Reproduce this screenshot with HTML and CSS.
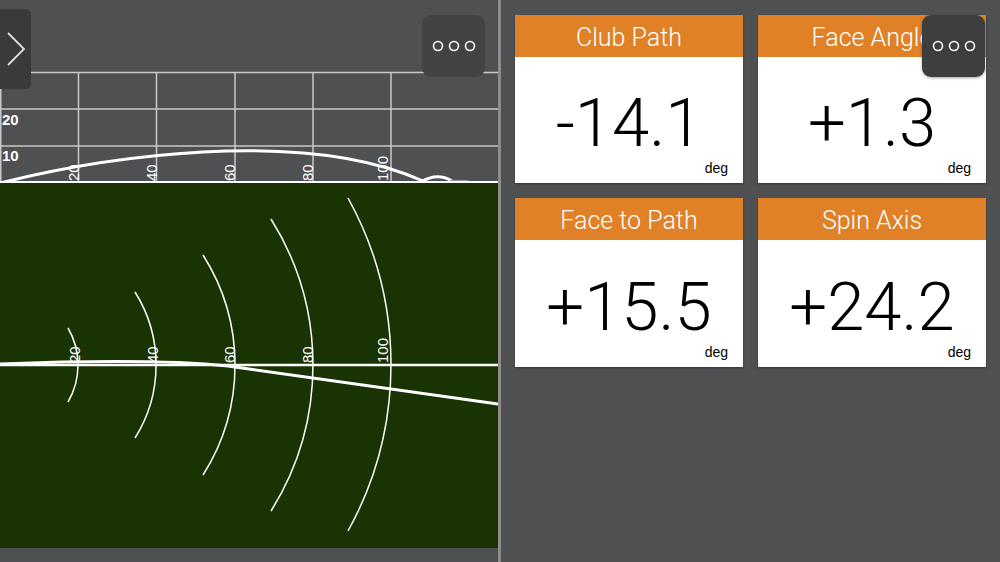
FILE: index.html
```html
<!DOCTYPE html>
<html lang="en">
<head>
  <meta charset="UTF-8" />
  <meta name="viewport" content="width=device-width, initial-scale=1.0"/>
  <title>Shot Data</title>
  <link rel="stylesheet" href="styles.css">
</head>
<body>
  <div class="screen">
    <section class="flight">
      <!-- side view: height over carry -->
      <svg class="side-view" width="498" height="183" viewBox="0 0 498 183">
        <g class="grid">
          <line x1="0" y1="72.5" x2="498" y2="72.5"/>
          <line x1="0" y1="109" x2="498" y2="109"/>
          <line x1="0" y1="146" x2="498" y2="146"/>
          <line x1="0.75" y1="72" x2="0.75" y2="182"/>
          <line x1="78.5" y1="72" x2="78.5" y2="182"/>
          <line x1="156.5" y1="72" x2="156.5" y2="182"/>
          <line x1="235" y1="72" x2="235" y2="182"/>
          <line x1="313" y1="72" x2="313" y2="182"/>
          <line x1="391" y1="72" x2="391" y2="182"/>
        </g>
        <text class="y-label" x="2" y="124.5">20</text>
        <text class="y-label" x="2" y="161">10</text>
        <text class="x-label" transform="translate(79 181) rotate(-90)">20</text>
        <text class="x-label" transform="translate(157 181) rotate(-90)">40</text>
        <text class="x-label" transform="translate(235 181) rotate(-90)">60</text>
        <text class="x-label" transform="translate(313 181) rotate(-90)">80</text>
        <text class="x-label" transform="translate(388 181) rotate(-90)">100</text>
        <path class="trace" d="M0 183 C 100 158, 300 126, 423 181"/>
        <path class="bounce" d="M421 182 Q437 172 452 181"/>
        <line class="roll" x1="450" y1="181" x2="468" y2="181"/>
        <line class="ground" x1="0" y1="182" x2="498" y2="182"/>
      </svg>

      <!-- top view: dispersion -->
      <svg class="top-view" width="498" height="365" viewBox="0 183 498 365">
        <rect x="0" y="183" width="498" height="365" class="turf"/>
        <g class="rings">
          <path d="M68 328 A73.5 73.5 0 0 1 68 402"/>
          <path d="M135 292 A137 137 0 0 1 135 438"/>
          <path d="M203 255 A205 205 0 0 1 203 475"/>
          <path d="M271 219 A275 275 0 0 1 271 511"/>
          <path d="M348 198 A344 344 0 0 1 348 531"/>
        </g>
        <text class="x-label" transform="translate(80 363) rotate(-90)">20</text>
        <text class="x-label" transform="translate(158 363) rotate(-90)">40</text>
        <text class="x-label" transform="translate(235 363) rotate(-90)">60</text>
        <text class="x-label" transform="translate(313 363) rotate(-90)">80</text>
        <text class="x-label" transform="translate(388 363) rotate(-90)">100</text>
        <line class="target" x1="0" y1="365" x2="498" y2="365"/>
        <path class="shot" d="M0 364 C 80 361, 170 360, 228 366 L 498 404"/>
      </svg>

      <button class="drawer-toggle" aria-label="Open">
        <svg width="20" height="34" viewBox="0 0 20 34"><path d="M2 1 L18 17 L2 33"/></svg>
      </button>
      <button class="menu-btn flight-menu" aria-label="More">
        <svg width="44" height="12" viewBox="0 0 44 12">
          <circle cx="6" cy="6" r="4.5"/><circle cx="22" cy="6" r="4.5"/><circle cx="38" cy="6" r="4.5"/>
        </svg>
      </button>
    </section>

    <div class="divider"></div>

    <section class="metrics">
      <div class="tile">
        <div class="tile-title">Club Path</div>
        <div class="tile-body">
          <div class="tile-value">-14.1</div>
          <div class="tile-unit">deg</div>
        </div>
      </div>
      <div class="tile">
        <div class="tile-title">Face Angle</div>
        <div class="tile-body">
          <div class="tile-value">+1.3</div>
          <div class="tile-unit">deg</div>
        </div>
      </div>
      <div class="tile">
        <div class="tile-title">Face to Path</div>
        <div class="tile-body">
          <div class="tile-value">+15.5</div>
          <div class="tile-unit">deg</div>
        </div>
      </div>
      <div class="tile">
        <div class="tile-title">Spin Axis</div>
        <div class="tile-body">
          <div class="tile-value">+24.2</div>
          <div class="tile-unit">deg</div>
        </div>
      </div>

      <button class="menu-btn metrics-menu" aria-label="More">
        <svg width="44" height="12" viewBox="0 0 44 12">
          <circle cx="6" cy="6" r="4.5"/><circle cx="22" cy="6" r="4.5"/><circle cx="38" cy="6" r="4.5"/>
        </svg>
      </button>
    </section>
  </div>
</body>
</html>
```

FILE: styles.css
```css
* { box-sizing: border-box; }
html, body {
  margin: 0;
  height: 100%;
}
body {
  background: #4f5052;
  font-family: Roboto, "Liberation Sans", Arial, sans-serif;
  overflow: hidden;
}
.screen {
  display: flex;
  width: 1000px;
  height: 562px;
}

/* left: ball flight */
.flight {
  position: relative;
  width: 498px;
  display: flex;
  flex-direction: column;
}
.flight svg { display: block; }
.grid line {
  stroke: #c9c9c9;
  stroke-width: 1.5;
}
.y-label {
  fill: #fff;
  font-family: "Liberation Sans", Arial, sans-serif;
  font-weight: bold;
  font-size: 15px;
}
.x-label {
  fill: #fff;
  font-family: "Liberation Sans", Arial, sans-serif;
  font-size: 15px;
}
.trace, .bounce, .shot {
  fill: none;
  stroke: #fff;
  stroke-width: 3;
}
.roll {
  stroke: #9a9a9a;
  stroke-width: 2;
}
.ground {
  stroke: #fff;
  stroke-width: 2;
}
.turf { fill: #1a3303; }
.rings path {
  fill: none;
  stroke: #fff;
  stroke-width: 1.5;
}
.target {
  stroke: #fff;
  stroke-width: 2.5;
}

.drawer-toggle {
  position: absolute;
  left: 0;
  top: 9px;
  width: 31px;
  height: 80px;
  padding: 0;
  border: none;
  border-radius: 0 5px 5px 0;
  background: #3a3a3c;
  display: flex;
  align-items: center;
  justify-content: center;
}
.drawer-toggle path {
  fill: none;
  stroke: #e0e0e0;
  stroke-width: 1.8;
}

.menu-btn {
  position: absolute;
  top: 15px;
  width: 63px;
  height: 62px;
  padding: 0;
  border: none;
  border-radius: 9px;
  background: #434345;
  display: flex;
  align-items: center;
  justify-content: center;
}
.menu-btn circle {
  fill: none;
  stroke: #fff;
  stroke-width: 1.6;
}
.flight-menu { right: 13px; }
.metrics-menu {
  right: 15px;
  background: #3e3e40;
  box-shadow: 0 1px 3px rgba(0,0,0,0.35);
}

.divider {
  width: 3px;
  background: #8d8d8d;
}

/* right: metric tiles */
.metrics {
  position: relative;
  flex: 1;
  padding: 15px 14px 0 14px;
  display: grid;
  grid-template-columns: 228px 228px;
  grid-template-rows: 168px 169px;
  column-gap: 15px;
  row-gap: 15px;
  align-content: start;
}
.tile {
  background: #fff;
  display: flex;
  flex-direction: column;
  box-shadow: 0 1px 2px rgba(0,0,0,0.35);
}
.tile-title {
  background: #e08127;
  color: #fff;
  height: 42px;
  padding-top: 2px;
  font-size: 25px;
  font-weight: 300;
  text-align: center;
  line-height: 41px;
}
.tile-body {
  flex: 1;
  display: flex;
  flex-direction: column;
}
.tile-value {
  flex: 1;
  display: flex;
  align-items: center;
  justify-content: center;
  padding-top: 30px;
  font-size: 67px;
  font-weight: 300;
  line-height: 1;
  color: #000;
}
.tile-unit {
  text-align: right;
  padding: 0 15px 7px 0;
  font-family: "Liberation Sans", Arial, sans-serif;
  font-size: 14px;
  line-height: 16px;
  color: #000;
}
```
